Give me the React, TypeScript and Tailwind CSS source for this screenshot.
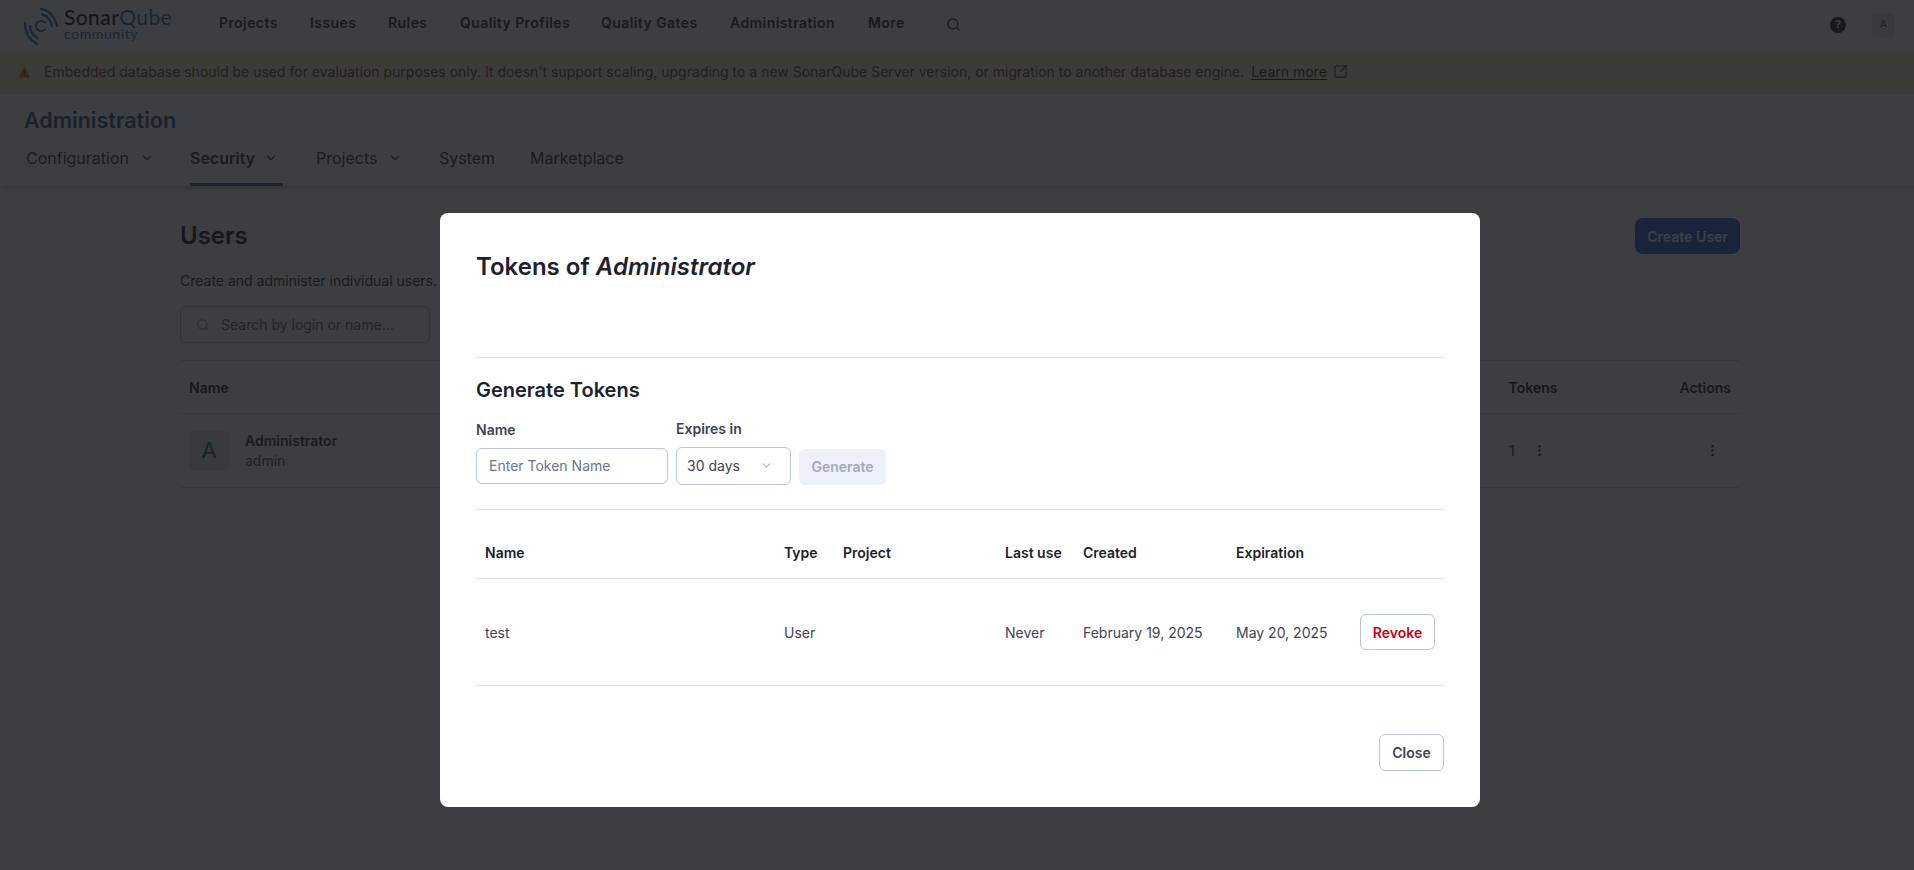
import { ChevronDown, Search, EllipsisVertical, SquareArrowOutUpRight } from "lucide-react";

function Logo() {
  return (
    <div className="flex items-center gap-[2px] w-[164px]">
      <svg width="42" height="44" viewBox="0 0 42 44" fill="none" stroke="#2a7cb8" strokeWidth="2.3" strokeLinecap="round" className="shrink-0">
        <path d="M21 6C29 7 35 14 37 23" />
        <path d="M22 11.5C27 12 31 17 32 23" />
        <path d="M25 19.5A5.2 5.2 0 1 0 25 26.5" strokeWidth="1.8" />
        <path d="M5 20C5 30 10 37 17 41" />
        <path d="M10 23C10 28 13 32 17 35" />
      </svg>
      <div className="flex flex-col -mt-[2px]">
        <div className="text-[21px] leading-[20px] font-medium text-[#290042] font-[Lato] tracking-[0.4px]">
          Sonar<span className="text-[#2272b4] font-normal">Qube</span>
        </div>
        <div className="text-[14px] leading-[14px] text-[#2272b4] font-[Lato] tracking-[0.6px]">community</div>
      </div>
    </div>
  );
}

function TopNav() {
  const items: [string, string][] = [
    ["Projects", "w-[91px]"],
    ["Issues", "w-[78px]"],
    ["Rules", "w-[72px]"],
    ["Quality Profiles", "w-[141px]"],
    ["Quality Gates", "w-[129px]"],
    ["Administration", "w-[138px]"],
    ["More", "w-[78px]"],
  ];
  return (
    <header className="h-[49px] flex items-center pl-[20px] pr-[19px] bg-white">
      <Logo />
      <nav className="flex items-center ml-[35px] -mt-[4px]">
        {items.map(([t, w]) => (
          <span key={t} className={`${w} text-[14px] font-semibold tracking-[0.42px] text-[#2a2d3a]`}>{t}</span>
        ))}
      </nav>
      <Search size={15} className="text-[#2a2d3a]" />
      <div className="ml-auto flex items-center gap-[26px]">
        <div className="w-[16px] h-[16px] rounded-full bg-[#1d212f] text-white text-[11px] font-bold flex items-center justify-center">?</div>
        <div className="w-[23px] h-[24px] rounded-[3px] bg-[#e3e8ec] text-[#1c5a82] text-[11px] flex items-center justify-center">A</div>
      </div>
    </header>
  );
}

function Banner() {
  return (
    <div className="h-[45px] bg-[#fdeec4] flex items-center pl-[18px] text-[14px] text-[#693f1b]">
      <svg width="13" height="13" viewBox="0 0 13 13" className="mr-[13px] shrink-0">
        <path d="M6.5 1L12.5 12.5H.5z" fill="#c9862e" />
        <path d="M6.5 5v4M6.5 10v1.2" stroke="#5c3b12" strokeWidth="1.2" />
      </svg>
      <span>Embedded database should be used for evaluation purposes only. It doesn't support scaling, upgrading to a new SonarQube Server version, or migration to another database engine.</span>
      <span className="ml-[7px] text-[#2a2d3a] underline underline-offset-2">Learn more</span>
      <SquareArrowOutUpRight size={15} className="ml-[6px] text-[#3e4356]" />
    </div>
  );
}

function AdminHeader() {
  return (
    <div className="h-[92px] bg-white shadow-[0_2px_6px_rgba(0,0,0,0.25)] pl-[24px] relative">
      <h1 className="text-[21.5px] leading-[28px] font-semibold text-[#2d5a82] pt-[12px] h-[43px] box-content -mb-[12px]">Administration</h1>
      <div className="flex items-start mt-[1px] text-[16px] text-[#2f3342] h-[37px]">
        <div className="flex items-center ml-[2px] w-[164px] pt-[8px]">
          Configuration
          <ChevronDown size={14} className="ml-[11px]" />
        </div>
        <div className="flex items-center w-[126px] pt-[8px] font-semibold">
          Security
          <ChevronDown size={14} className="ml-[9px]" />
        </div>
        <div className="flex items-center w-[123px] pt-[8px]">
          Projects
          <ChevronDown size={14} className="ml-[11px]" />
        </div>
        <div className="w-[91px] pt-[8px]">System</div>
        <div className="pt-[8px]">Marketplace</div>
      </div>
      <div className="h-[3px] w-[93px] ml-[166px] bg-[#3b6ca8] absolute bottom-0" />
    </div>
  );
}

function UsersPage() {
  return (
    <main className="px-[180px] pt-[32px] pr-[174px] bg-white">
      <div className="flex items-center justify-between h-[36px]">
        <h2 className="text-[24px] font-semibold text-[#1d212f]">Users</h2>
        <button className="h-[36px] w-[105px] rounded-[8px] bg-[#2a5fe0] text-white text-[14px] font-semibold">Create User</button>
      </div>
      <p className="text-[14px] leading-[20px] text-[#2f3342] mt-[17px]">Create and administer individual users.</p>
      <div className="mt-[15px] w-[250px] h-[37px] border border-[#b9c2d6] rounded-[6px] flex items-center pl-[15px] text-[14px] text-[#5d6880]">
        <Search size={14} className="mr-[11px] text-[#8b94a8]" />
        Search by login or name...
      </div>
      <div className="mt-[17px] border-t border-[#d5d9e3] h-[53px] flex items-center px-[9px] text-[14px] font-semibold text-[#1d212f]">
        <span>Name</span>
        <span className="ml-auto">Tokens</span>
        <span className="ml-[122px]">Actions</span>
      </div>
      <div className="border-t border-b border-[#d5d9e3] h-[75px] flex items-center px-[9px]">
        <div className="w-[40px] h-[40px] rounded-[4px] bg-[#e3e8ec] text-[#1c5a82] text-[22px] flex items-center justify-center">A</div>
        <div className="ml-[16px]">
          <div className="text-[14px] leading-[20px] font-semibold text-[#2f3342]">Administrator</div>
          <div className="text-[14px] leading-[20px] text-[#4e5a6e]">admin</div>
        </div>
        <span className="ml-auto text-[14px] text-[#2f3342] w-[24px]">1</span>
        <EllipsisVertical size={15} className="text-[#2f3342] ml-[-1px]" />
        <EllipsisVertical size={15} className="text-[#2f3342] ml-[158px] mr-[11px]" />
      </div>
    </main>
  );
}

function TokensModal() {
  const headers: [string, string][] = [
    ["Name", "w-[299px]"],
    ["Type", "w-[59px]"],
    ["Project", "w-[162px]"],
    ["Last use", "w-[78px]"],
    ["Created", "w-[153px]"],
    ["Expiration", "w-[124px]"],
    ["", "w-[93px]"],
  ];
  return (
    <div className="absolute left-[440px] top-[213px] w-[1040px] h-[594px] bg-white rounded-[8px] p-[36px] flex flex-col text-[#3e4356]">
      <h2 className="text-[24px] leading-[36px] font-semibold text-[#1d212f]">
        Tokens of <em className="italic">Administrator</em>
      </h2>
      <hr className="mt-[72px] border-t border-[#e1e3e8]" />
      <h3 className="mt-[18px] text-[20px] leading-[28px] font-semibold text-[#1d212f]">Generate Tokens</h3>
      <div className="mt-[10px] flex items-end h-[73px]">
        <div className="w-[192px] mb-[1px]">
          <label className="block text-[14px] leading-[20px] font-semibold mb-[8px]">Name</label>
          <div className="h-[36px] border border-[#b8c4dc] rounded-[6px] flex items-center pl-[12px] text-[14px] text-[#69768f]">Enter Token Name</div>
        </div>
        <div className="ml-[8px] w-[115px]">
          <label className="block text-[14px] leading-[20px] font-semibold mb-[8px]">Expires in</label>
          <div className="h-[38px] border border-[#b8c4dc] rounded-[6px] flex items-center pl-[10px] text-[14px] text-[#3e4356]">
            30 days
            <ChevronDown size={13} className="ml-[20px] text-[#a5aec2]" />
          </div>
        </div>
        <button className="ml-[8px] h-[36px] w-[87px] rounded-[6px] bg-[#eef1f9] text-[#a1aabf] text-[14px] font-semibold">Generate</button>
      </div>
      <hr className="mt-[24px] border-t border-[#e1e3e8]" />
      <table className="w-[968px] table-fixed border-collapse text-[14px]">
        <thead>
          <tr className="h-[69px] border-b border-[#e1e3e8]">
            {headers.map(([t, w], i) => (
              <th key={i} className={`${w} pl-[9px] pt-[18px] text-left font-semibold text-[#1d212f]`}>{t}</th>
            ))}
          </tr>
        </thead>
        <tbody>
          <tr className="h-[107px] border-b border-[#e1e3e8]">
            <td className="pl-[9px]">test</td>
            <td className="pl-[9px]">User</td>
            <td className="pl-[9px]"></td>
            <td className="pl-[9px]">Never</td>
            <td className="pl-[9px]">February 19, 2025</td>
            <td className="pl-[9px]">May 20, 2025</td>
            <td className="pl-[9px]">
              <button className="h-[36px] w-[75px] border border-[#b8c4dc] rounded-[6px] text-[#c8000f] text-[14px] font-semibold bg-white">Revoke</button>
            </td>
          </tr>
        </tbody>
      </table>
      <div className="mt-[48px] flex justify-end">
        <button className="h-[37px] w-[65px] border border-[#b8c4dc] rounded-[6px] text-[#3e4356] text-[14px] font-semibold bg-white">Close</button>
      </div>
    </div>
  );
}

export default function App() {
  return (
    <div className="relative h-[870px] overflow-hidden bg-white font-[Inter,sans-serif]">
      <TopNav />
      <Banner />
      <AdminHeader />
      <UsersPage />
      <div className="absolute inset-0 bg-[rgba(22,23,26,0.83)]" />
      <TokensModal />
    </div>
  );
}
